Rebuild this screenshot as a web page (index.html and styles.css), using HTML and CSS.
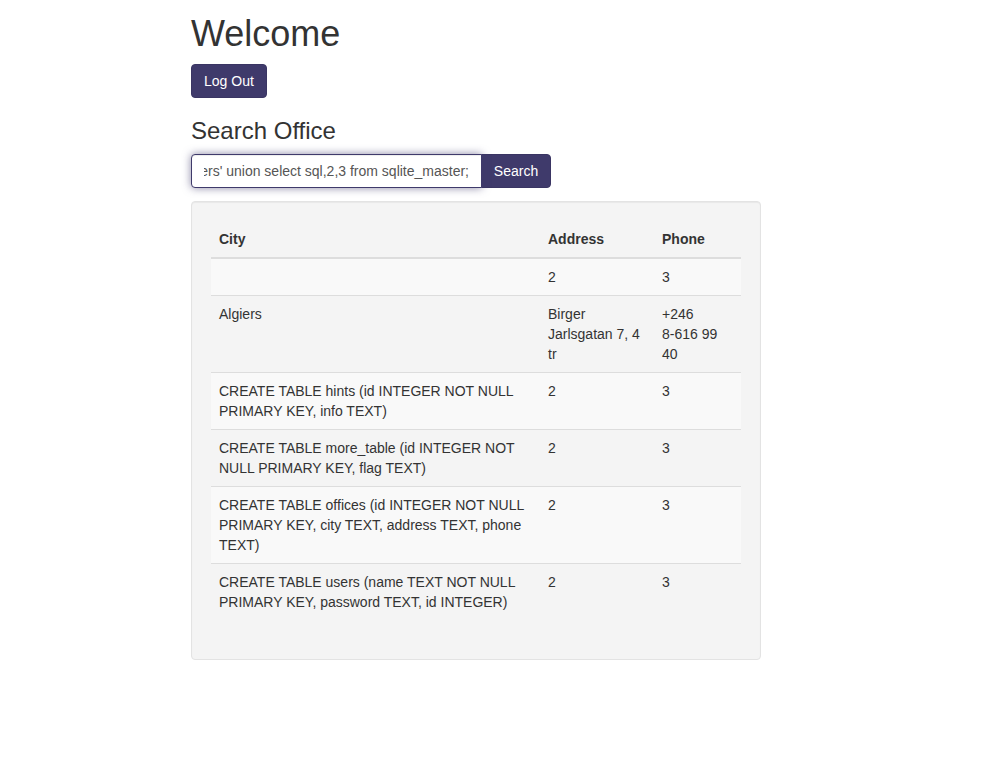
FILE: index.html
```html
<!DOCTYPE html>
<html>
<head>
<meta charset="utf-8">
<title>Welcome</title>
<link rel="stylesheet" href="styles.css">
</head>
<body>
<div class="page">
  <h1 class="title">Welcome</h1>
  <button class="btn">Log Out</button>
  <h3 class="subtitle">Search Office</h3>
  <div class="input-group">
    <div class="field"><span class="field-inner"><span class="field-text">Algiers' union select sql,2,3 from sqlite_master;</span></span></div>
    <button class="btn btn-attached">Search</button>
  </div>
  <div class="well">
    <table class="table">
      <thead>
        <tr><th class="c-city">City</th><th class="c-addr">Address</th><th class="c-phone">Phone</th></tr>
      </thead>
      <tbody>
        <tr><td></td><td>2</td><td>3</td></tr>
        <tr><td>Algiers</td><td>Birger Jarlsgatan 7, 4 tr</td><td><div class="phone">+246 <span class="nowrap">8-616</span> 99 40</div></td></tr>
        <tr><td>CREATE TABLE hints (id INTEGER NOT NULL PRIMARY KEY, info TEXT)</td><td>2</td><td>3</td></tr>
        <tr><td>CREATE TABLE more_table (id INTEGER NOT NULL PRIMARY KEY, flag TEXT)</td><td>2</td><td>3</td></tr>
        <tr><td>CREATE TABLE offices (id INTEGER NOT NULL PRIMARY KEY, city TEXT, address TEXT, phone TEXT)</td><td>2</td><td>3</td></tr>
        <tr><td>CREATE TABLE users (name TEXT NOT NULL PRIMARY KEY, password TEXT, id INTEGER)</td><td>2</td><td>3</td></tr>
      </tbody>
    </table>
  </div>
</div>
</body>
</html>
```
FILE: styles.css
```css
* { box-sizing: border-box; }
html, body { margin: 0; padding: 0; background: #fff; }
body {
  font-family: "Liberation Sans", Arial, Helvetica, sans-serif;
  font-size: 14px;
  line-height: 1.42857143;
  color: #333;
}
.page {
  width: 570px;
  margin-left: 191px;
}
.title {
  font-size: 36px;
  font-weight: 500;
  line-height: 1.1;
  margin: 14px 0 10px;
}
.subtitle {
  font-size: 24px;
  font-weight: 500;
  line-height: 1.1;
  margin: 20px 0 10px;
}
.btn {
  display: inline-block;
  font-family: inherit;
  font-size: 14px;
  line-height: 20px;
  padding: 6px 12px;
  color: #fff;
  background: #3f3a6b;
  border: 1px solid #3a3563;
  border-radius: 4px;
  cursor: pointer;
  margin: 0;
}
.input-group {
  display: flex;
  width: 360px;
}
.field {
  width: 291px;
  height: 34px;
  padding: 6px 12px;
  border: 1px solid #3f3a6b;
  border-radius: 4px 0 0 4px;
  background: #fff;
  box-shadow: inset 0 1px 1px rgba(0,0,0,.075), 0 0 8px rgba(63,58,107,.6);
  color: #555;
  position: relative;
  z-index: 1;
}
.field-inner {
  display: flex;
  justify-content: flex-end;
  overflow: hidden;
  white-space: nowrap;
  line-height: 20px;
  height: 20px;
}
.field-text { flex: none; }
.btn-attached {
  width: 70px;
  height: 34px;
  border-radius: 0 4px 4px 0;
  margin-left: -1px;
  padding: 6px 0;
  text-align: center;
}
.well {
  margin-top: 13px;
  padding: 19px;
  background: #f4f4f4;
  border: 1px solid #e3e3e3;
  border-radius: 4px;
  box-shadow: inset 0 1px 1px rgba(0,0,0,.05);
  margin-bottom: 20px;
}
.table {
  width: 100%;
  border-collapse: collapse;
  border-spacing: 0;
  margin-bottom: 20px;
}
.table th, .table td {
  padding: 8px;
  line-height: 20px;
  vertical-align: top;
  text-align: left;
}
.table th {
  font-weight: bold;
  vertical-align: bottom;
  border-bottom: 2px solid #ddd;
}
.table td { border-top: 1px solid #ddd; }
.table tbody tr:first-child td { border-top: 0; }
.table tbody tr:nth-child(odd) { background: #f9f9f9; }
.c-city { width: 329px; }
.c-addr { width: 114px; }
.c-phone { width: 87px; }
.phone { max-width: 60px; }
.nowrap { white-space: nowrap; }
```
